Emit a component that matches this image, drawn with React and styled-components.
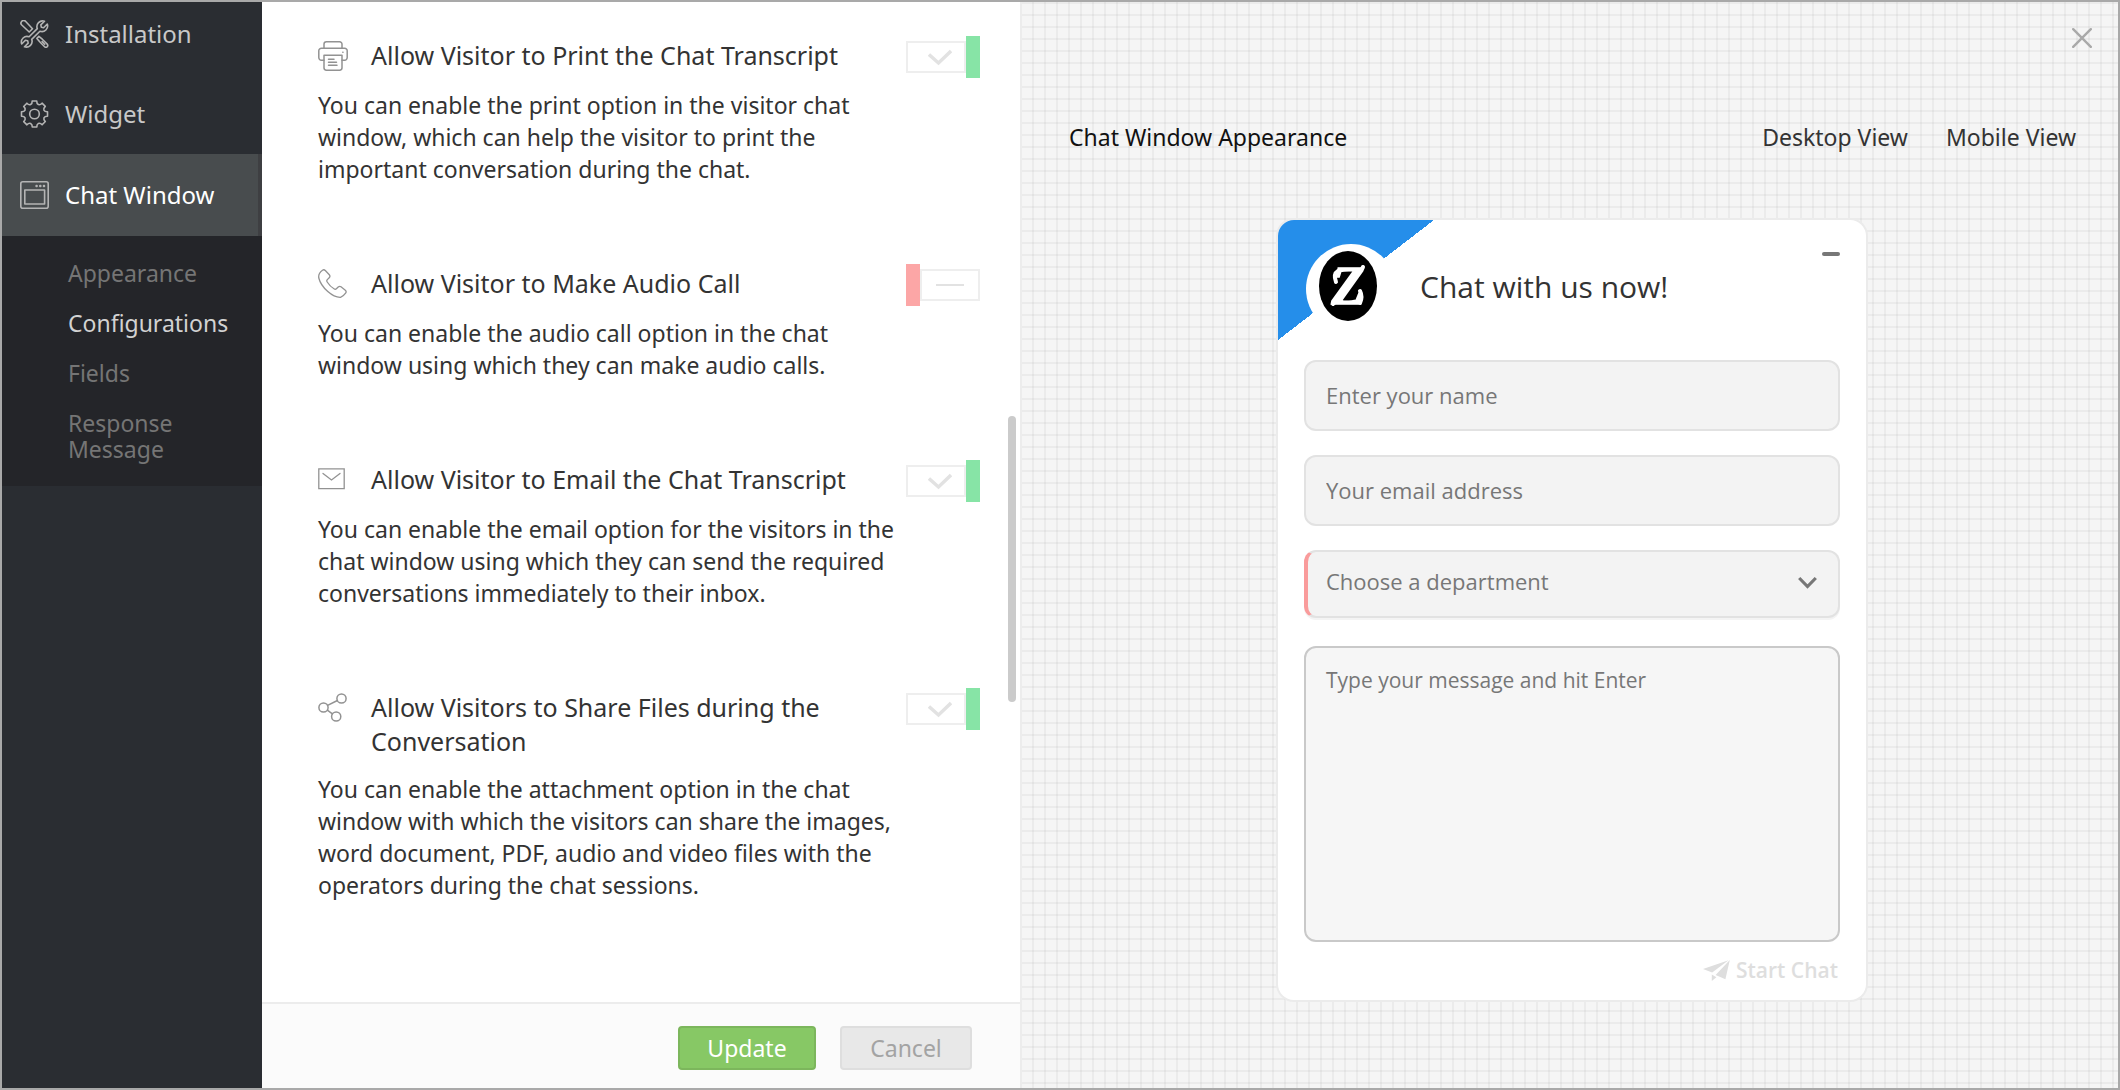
import { useState } from "react";
import styled, { createGlobalStyle } from "styled-components";

// ========================================
// Global
// ========================================
const GlobalStyle = createGlobalStyle`
  * {
    box-sizing: border-box;
  }

  body {
    margin: 0;
    font-family: "Noto Sans", "Open Sans", sans-serif;
    color: #333;
  }

  h1, h2, p, ul {
    margin: 0;
    padding: 0;
    font-weight: normal;
  }

  button, input, select, textarea {
    font-family: inherit;
  }
`;

const Screen = styled.div`
  display: grid;
  grid-template-columns: 260px 760fr 1096fr;
  min-height: 100vh;
  border: 2px solid #a9a9a9;
  background: #fff;
`;

// ========================================
// Sidebar
// ========================================
const Sidebar = styled.nav`
  background: #2a2d32;
  overflow: hidden;
`;

const NavList = styled.ul`
  list-style: none;
  margin-top: -8px;
`;

const NavLink = styled.a`
  display: flex;
  align-items: center;
  gap: 16px;
  height: ${(props) => (props.$active ? "82px" : "80px")};
  padding: 0 18px;
  font-size: 24px;
  line-height: 32px;
  text-decoration: none;
  color: ${(props) => (props.$active ? "#fff" : "#c8c8c8")};
  background: ${(props) => (props.$active ? "#484c4e" : "transparent")};
  border-right: ${(props) => (props.$active ? "4px solid #3e3f42" : "none")};

  svg {
    flex: none;
    color: #b4b4b4;
  }
`;

const SubList = styled.ul`
  list-style: none;
  display: flex;
  flex-direction: column;
  gap: 24px;
  padding: 24px 20px 24px 66px;
  background: #242529;
`;

const SubLink = styled.a`
  display: block;
  font-size: 23px;
  line-height: 26px;
  text-decoration: none;
  color: ${(props) => (props.$active ? "#d2d2d2" : "#757575")};
`;

// ========================================
// Settings
// ========================================
const Settings = styled.main`
  position: relative;
  display: flex;
  flex-direction: column;
  border-right: 2px solid #ececec;
`;

const OptionList = styled.div`
  flex: 1;
  display: flex;
  flex-direction: column;
  gap: 79px;
  padding: 34px 40px 40px 56px;
`;

const OptionHead = styled.div`
  display: flex;
  align-items: flex-start;
  margin-bottom: 11px;
`;

const OptionIcon = styled.span`
  flex: none;
  width: 53px;
  padding-top: 5px;
  color: #929292;

  svg {
    display: block;
  }
`;

const OptionTitle = styled.h2`
  flex: 1;
  padding: 2px 0 4px;
  font-size: 25px;
  line-height: 34px;
`;

const OptionText = styled.p`
  max-width: 590px;
  font-size: 23px;
  line-height: 32px;
`;

const SwitchLabel = styled.label`
  position: relative;
  flex: none;
  display: flex;
  flex-direction: ${(props) => (props.$on ? "row" : "row-reverse")};
  align-items: center;
  width: 74px;
  height: 42px;
  cursor: pointer;
`;

const SwitchInput = styled.input`
  position: absolute;
  inset: 0;
  width: 100%;
  height: 100%;
  margin: 0;
  opacity: 0;
  cursor: pointer;
`;

const SwitchTrack = styled.span`
  flex: 1;
  display: flex;
  align-items: center;
  justify-content: center;
  height: 32px;
  padding-left: ${(props) => (props.$on ? "8px" : "0")};
  border: 2px solid #eee;
  color: #e2e2e2;
`;

const SwitchKnob = styled.span`
  width: 14px;
  height: 42px;
  background: ${(props) => (props.$on ? "#87e4a6" : "#fca6a6")};
`;

const ScrollThumb = styled.div`
  position: absolute;
  top: 414px;
  right: 4px;
  width: 8px;
  height: 286px;
  border-radius: 4px;
  background: #cbcbcb;
`;

const Footer = styled.footer`
  display: flex;
  justify-content: flex-end;
  gap: 24px;
  padding: 22px 48px 18px;
  border-top: 2px solid #ececec;
  background: #fbfbfb;
`;

const Button = styled.button`
  height: 44px;
  min-width: ${(props) => (props.$primary ? "138px" : "132px")};
  padding: 0;
  font-size: 23px;
  line-height: 32px;
  border-radius: 4px;
  border: 2px solid ${(props) => (props.$primary ? "#7cb65c" : "#dedede")};
  background: ${(props) => (props.$primary ? "#87c865" : "#e8e8e8")};
  color: ${(props) => (props.$primary ? "#fff" : "#a3a3a3")};
  cursor: pointer;
`;

// ========================================
// Preview
// ========================================
const Preview = styled.section`
  padding: 26px 26px 80px 30px;
  background-color: #f5f5f5;
  background-image:
    linear-gradient(to right, rgba(0, 0, 0, 0.04) 2px, transparent 2px),
    linear-gradient(to bottom, rgba(0, 0, 0, 0.04) 2px, transparent 2px);
  background-size: 12px 12px;
  background-position: 10px 0;
`;

const CloseButton = styled.button`
  display: block;
  margin-left: auto;
  padding: 0;
  border: none;
  background: none;
  color: #a9a9a9;
  cursor: pointer;

  svg {
    display: block;
  }
`;

const PreviewHeader = styled.div`
  display: flex;
  align-items: center;
  gap: 38px;
  margin-top: 73px;
  padding: 0 16px 0 17px;
  font-size: 23px;
  line-height: 32px;
`;

const PreviewTitle = styled.h1`
  flex: 1;
  font-size: 23px;
  line-height: 32px;
  color: #111;
`;

const ViewLink = styled.a`
  color: #333;
  text-decoration: none;
`;

const ChatCard = styled.form`
  max-width: 588px;
  margin: 67px auto 0;
  border-radius: 16px;
  overflow: hidden;
  background: #fff;
  box-shadow: 0 0 0 2px #ebebeb;
  font-family: "Open Sans", "Noto Sans", sans-serif;
`;

const ChatHeader = styled.div`
  display: flex;
  align-items: center;
  gap: 24px;
  padding: 24px 26px 26px 28px;
  background: linear-gradient(to bottom right, #258eea 50%, transparent 50%) no-repeat 0 0 / 156px 120px;
`;

const Logo = styled.span`
  flex: none;
  display: flex;
  align-items: center;
  justify-content: center;
  width: 90px;
  height: 90px;
  padding: 0 6px 6px 0;
  border-radius: 50%;
  background: #fff;
`;

const ChatTitle = styled.h2`
  flex: 1;
  padding-bottom: 4px;
  font-size: 30px;
  line-height: 40px;
`;

const MinimizeButton = styled.button`
  align-self: flex-start;
  padding: 8px 0;
  border: none;
  background: none;
  cursor: pointer;

  span {
    display: block;
    width: 18px;
    height: 4px;
    border-radius: 2px;
    background: #777;
  }
`;

const ChatBody = styled.div`
  display: flex;
  flex-direction: column;
  gap: 24px;
  padding: 0 26px 14px;
`;

const Field = styled.input`
  width: 100%;
  height: 71px;
  padding: 0 20px 2px;
  font-size: 22px;
  border: 2px solid #e2e2e2;
  border-radius: 12px;
  background: #f3f3f3;
  color: #333;

  &::placeholder {
    color: #777;
  }
`;

const SelectWrap = styled.div`
  position: relative;
  margin-bottom: 4px;

  svg {
    position: absolute;
    right: 23px;
    top: 26px;
    pointer-events: none;
  }
`;

const Select = styled.select`
  appearance: none;
  display: block;
  width: 100%;
  height: 68px;
  padding: 0 56px 6px 18px;
  font-size: 22px;
  border: 2px solid #e2e2e2;
  border-left: 4px solid #f99b9b;
  border-radius: 12px;
  background: #f3f3f3;
  color: #777;
  box-shadow: 0 2px 0 #f4f4f4;
`;

const Message = styled.textarea`
  display: block;
  width: 100%;
  height: 296px;
  padding: 17px 20px;
  font-size: 21px;
  line-height: 30px;
  border: 2px solid #c9c9c9;
  border-radius: 12px;
  background: #f6f6f6;
  color: #333;
  resize: none;

  &::placeholder {
    color: #777;
  }
`;

const StartButton = styled.button`
  align-self: flex-end;
  display: flex;
  align-items: center;
  gap: 6px;
  margin-top: -12px;
  padding: 0 2px 0 0;
  font-size: 21px;
  font-weight: 600;
  line-height: 32px;
  border: none;
  background: none;
  color: #dedede;
  cursor: pointer;
`;

// ========================================
// Icons
// ========================================
const line = { fill: "none", stroke: "currentColor", strokeLinecap: "round", strokeLinejoin: "round" };

const ToolsIcon = () => (
  <svg width="29" height="28" viewBox="0 0 28 28" {...line} strokeWidth="1.6">
    <path d="M24 1.2 20.3 4.9l.5 2.3 2.3.5L26.8 4A5.7 5.7 0 0 1 19.4 11.2L11.2 19.4A5.7 5.7 0 0 1 4 26.8L7.7 23.1l-.5-2.3-2.3-.5L1.2 24A5.7 5.7 0 0 1 8.6 16.8L16.8 8.6A5.7 5.7 0 0 1 24 1.2z" />
    <path d="M1.3 1.3c1.1-1.1 2.7-1 3.7 0l7 7.4-3.3 3.3L1.3 5c-1-1-1.1-2.6 0-3.7z" />
    <path d="M16.4 18.4l2-2 3.4 2.8 4.9 4.9c.8.8.8 1.9 0 2.6-.7.8-1.8.8-2.6 0l-4.9-4.9z" />
    <path d="M21.6 21.6l2.6 2.6" />
  </svg>
);

// eight teeth, rounded valleys between them
const polar = (r, a) => `${(14.5 + r * Math.cos(a)).toFixed(2)} ${(14 + r * Math.sin(a)).toFixed(2)}`;
const gearPath = Array.from({ length: 8 }, (_, i) => {
  const a = (i * Math.PI) / 4;
  const start = i === 0 ? `M${polar(13.2, a - 0.17)}` : "";
  return `${start} L${polar(13.2, a + 0.17)} Q${polar(10.6, a + 0.2)} ${polar(10.2, a + 0.39)} Q${polar(10.6, a + 0.58)} ${polar(13.2, a + 0.61)}`;
}).join("") + "z";

const GearIcon = () => (
  <svg width="29" height="28" viewBox="0 0 29 28" {...line} strokeWidth="1.6">
    <path d={gearPath} />
    <circle cx="14.5" cy="14" r="4.8" />
  </svg>
);

const WindowIcon = () => (
  <svg width="29" height="28" viewBox="0 0 29 28" {...line} strokeWidth="1.6">
    <rect x="0.8" y="0.8" width="27.4" height="26.4" rx="2" />
    <rect x="4.8" y="9" width="19.8" height="14" />
    <path d="M16.5 5h.2M20.2 5h.2M23.9 5h.2" strokeWidth="2.4" />
  </svg>
);

const PrinterIcon = () => (
  <svg width="30" height="30" viewBox="0 0 30 30" {...line} strokeWidth="1.5">
    <path d="M6 7.2V3.2a2.4 2.4 0 0 1 2.4-2.4h13.2A2.4 2.4 0 0 1 24 3.2v4" />
    <path d="M6 19.2H3.4A2.6 2.6 0 0 1 .8 16.6V9.8a2.6 2.6 0 0 1 2.6-2.6h23.200a2.6 2.6 0 0 1 2.6 2.6v6.8a2.6 2.6 0 0 1-2.6 2.6H24" />
    <path d="M6 14.200h18v12.6a2.4 2.4 0 0 1-2.4 2.4H8.4A2.4 2.4 0 0 1 6 26.8z" />
    <path d="M10.5 18.2h5.5M10.5 21.2h8M10.5 24.2h8.5M24.8 11.2h.2" />
  </svg>
);

const PhoneIcon = () => (
  <svg width="30" height="30" viewBox="0 0 30 30" {...line} strokeWidth="1.3">
    <path d="M4.5 1.2Q6 .2 7.3 1.5L11.3 5.8Q12.6 7.3 11.2 8.7L9.3 10.6Q8.3 11.7 9.2 13 12 17.5 16.3 20 17.4 20.6 18.4 19.7L20.2 18Q21.6 16.8 23 17.8L27.3 21.2Q28.8 22.6 27.6 24.2 25.5 27.2 22.5 28.3 16.5 28.5 9.8 22.6 2.5 16 .8 9 0 4.5 4.5 1.2z" />
  </svg>
);

const MailIcon = () => (
  <svg width="30" height="30" viewBox="0 0 30 30" {...line} strokeWidth="1.3">
    <path d="M.8 3.8h25.4v19.8H.8zM5 8.500l8.500 6.500 8.500-6.500" strokeLinejoin="miter" />
  </svg>
);

const ShareIcon = () => (
  <svg width="30" height="30" viewBox="0 0 30 30" {...line} strokeWidth="1.5">
    <circle cx="23.5" cy="5.5" r="4.6" />
    <circle cx="5.5" cy="14.5" r="4.6" />
    <circle cx="18.2" cy="23.5" r="4.6" />
    <path d="M9.6 12.4l9.8-4.9M9.3 17.2l5.1 3.6" />
  </svg>
);

const CheckIcon = () => (
  <svg width="24" height="17" viewBox="0 0 24 17" fill="none" stroke="currentColor" strokeWidth="3.4">
    <path d="M1 5.5l9.5 8.500L23 2" />
  </svg>
);

const DashIcon = () => (
  <svg width="28" height="2" viewBox="0 0 28 2">
    <path d="M0 0h28v2H0z" fill="currentColor" />
  </svg>
);

const CloseIcon = () => (
  <svg width="20" height="20" viewBox="0 0 20 20" {...line} strokeWidth="2.4">
    <path d="M1.2 1.2l17.6 17.6M18.8 1.2L1.2 18.8" />
  </svg>
);

const ChevronIcon = () => (
  <svg width="19" height="14" viewBox="0 0 19 14" fill="none" stroke="#777" strokeWidth="3.2">
    <path d="M1.2 2l8.300 8.500L17.8 2" />
  </svg>
);

const PlaneIcon = () => (
  <svg width="27" height="21" viewBox="0 0 27 21" fill="currentColor">
    <path d="M0 9L25.5.2 9.2 12.6zM26.8 0L22.4 19.2 12.6 15zM8.8 14.4l4.6 2.8-4.6 3.8z" />
  </svg>
);

const BrandLogo = () => (
  <svg width="58" height="70" viewBox="0 0 58 70">
    <ellipse cx="29" cy="35" rx="29" ry="35" fill="#000" />
    <text
      x="29"
      y="53"
      textAnchor="middle"
      fontFamily="Liberation Serif, serif"
      fontSize="54"
      fontWeight="bold"
      fontStyle="italic"
      fill="#fff"
      stroke="#fff"
      strokeWidth="1.5"
    >
      Z
    </text>
    <path d="M17 31q-3-8 2-11M40 20q3-1 4-4M14 53q4-5 9-2M41 40q3 6 0 12" fill="none" stroke="#fff" strokeWidth="4" strokeLinecap="round" />
  </svg>
);

// ========================================
// Data
// ========================================
const subItems = ["Appearance", "Configurations", "Fields", "Response Message"];

const options = [
  {
    id: "print",
    Icon: PrinterIcon,
    title: "Allow Visitor to Print the Chat Transcript",
    text: "You can enable the print option in the visitor chat window, which can help the visitor to print the important conversation during the chat.",
    on: true,
  },
  {
    id: "audio",
    Icon: PhoneIcon,
    title: "Allow Visitor to Make Audio Call",
    text: "You can enable the audio call option in the chat window using which they can make audio calls.",
    on: false,
  },
  {
    id: "email",
    Icon: MailIcon,
    title: "Allow Visitor to Email the Chat Transcript",
    text: "You can enable the email option for the visitors in the chat window using which they can send the required conversations immediately to their inbox.",
    on: true,
  },
  {
    id: "share",
    Icon: ShareIcon,
    title: "Allow Visitors to Share Files during the Conversation",
    text: "You can enable the attachment option in the chat window with which the visitors can share the images, word document, PDF, audio and video files with the operators during the chat sessions.",
    on: true,
  },
];

function Option({ option }) {
  const [on, setOn] = useState(option.on);
  const { id, Icon, title, text } = option;

  return (
    <section>
      <OptionHead>
        <OptionIcon>
          <Icon />
        </OptionIcon>
        <OptionTitle id={`${id}-title`}>{title}</OptionTitle>
        <SwitchLabel $on={on}>
          <SwitchInput
            type="checkbox"
            aria-labelledby={`${id}-title`}
            checked={on}
            onChange={(e) => setOn(e.target.checked)}
          />
          <SwitchTrack $on={on}>{on ? <CheckIcon /> : <DashIcon />}</SwitchTrack>
          <SwitchKnob $on={on} />
        </SwitchLabel>
      </OptionHead>
      <OptionText>{text}</OptionText>
    </section>
  );
}

function ChatPreview() {
  return (
    <ChatCard onSubmit={(e) => e.preventDefault()}>
      <ChatHeader>
        <Logo>
          <BrandLogo />
        </Logo>
        <ChatTitle>Chat with us now!</ChatTitle>
        <MinimizeButton type="button" aria-label="Minimize">
          <span />
        </MinimizeButton>
      </ChatHeader>
      <ChatBody>
        <Field type="text" aria-label="Name" placeholder="Enter your name" />
        <Field type="email" aria-label="Email" placeholder="Your email address" />
        <SelectWrap>
          <Select aria-label="Department" defaultValue="">
            <option value="">Choose a department</option>
          </Select>
          <ChevronIcon />
        </SelectWrap>
        <Message aria-label="Message" placeholder="Type your message and hit Enter" />
        <StartButton type="submit">
          <PlaneIcon />
          Start Chat
        </StartButton>
      </ChatBody>
    </ChatCard>
  );
}

// ========================================
// App
// ========================================
function App() {
  return (
    <>
      <GlobalStyle />
      <Screen>
        <Sidebar>
          <NavList>
            <li>
              <NavLink href="#installation">
                <ToolsIcon />
                Installation
              </NavLink>
            </li>
            <li>
              <NavLink href="#widget">
                <GearIcon />
                Widget
              </NavLink>
            </li>
            <li>
              <NavLink href="#chat-window" $active>
                <WindowIcon />
                Chat Window
              </NavLink>
              <SubList>
                {subItems.map((item) => (
                  <li key={item}>
                    <SubLink href="#chat-window" $active={item === "Configurations"}>
                      {item}
                    </SubLink>
                  </li>
                ))}
              </SubList>
            </li>
          </NavList>
        </Sidebar>

        <Settings>
          <OptionList>
            {options.map((option) => (
              <Option key={option.id} option={option} />
            ))}
          </OptionList>
          <ScrollThumb />
          <Footer>
            <Button type="button" $primary>
              Update
            </Button>
            <Button type="button">Cancel</Button>
          </Footer>
        </Settings>

        <Preview>
          <CloseButton type="button" aria-label="Close">
            <CloseIcon />
          </CloseButton>
          <PreviewHeader>
            <PreviewTitle>Chat Window Appearance</PreviewTitle>
            <ViewLink href="#desktop">Desktop View</ViewLink>
            <ViewLink href="#mobile">Mobile View</ViewLink>
          </PreviewHeader>
          <ChatPreview />
        </Preview>
      </Screen>
    </>
  );
}

export default App;
